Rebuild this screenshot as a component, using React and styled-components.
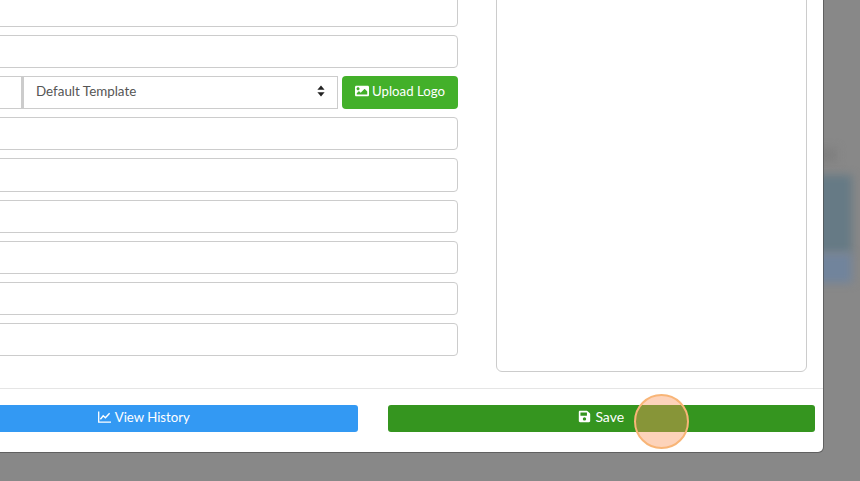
import React from "react";
import styled, { createGlobalStyle } from "styled-components";
import { FaImage, FaSave } from "react-icons/fa";

const Global = createGlobalStyle`
  html, body { margin: 0; padding: 0; background: #888; }
  body { font-family: "Lato", "Liberation Sans", sans-serif; }
`;

const Page = styled.div`
  position: relative;
  width: 860px;
  height: 481px;
  overflow: hidden;
  background: #888888;
`;

const BackdropBlob = styled.div`
  position: absolute;
  left: 815px;
  width: ${(p) => p.$w}px;
  top: ${(p) => p.$top}px;
  height: ${(p) => p.$h}px;
  background: ${(p) => p.$color};
  filter: blur(4px);
`;

const Modal = styled.div`
  position: relative;
  width: 901px;
  margin: -20px 0 0 -78px;
  box-sizing: border-box;
  background: #fff;
  border-radius: 0 0 5px 0;
  box-shadow: 0 0 0 1px rgba(70, 70, 70, 0.6);
`;

const Body = styled.div`
  display: flex;
  gap: 38px;
  padding: 13.6px 16px 16px;
`;

const Form = styled.div`
  flex: 1;
  display: flex;
  flex-direction: column;
  gap: 8px;
  padding-bottom: 16px;
`;

const Field = styled.div`
  height: 33.2px;
  box-sizing: border-box;
  border: 1px solid #ccc;
  border-radius: 4px;
  background: #fff;
`;

const Row = styled.div`
  display: flex;
  height: 33.2px;
`;

const Addon = styled.div`
  width: 85px;
  box-sizing: border-box;
  border: 1px solid #ccc;
  border-right-width: 2px;
  border-radius: 4px 0 0 4px;
`;

const Select = styled.div`
  flex: 1;
  display: flex;
  align-items: center;
  justify-content: space-between;
  box-sizing: border-box;
  padding: 0 12px 3px;
  border: 1px solid #ccc;
  font-size: 13.4px;
  color: #555;
  margin-right: 4px;
`;

const UploadButton = styled.div`
  width: 116px;
  display: flex;
  align-items: center;
  justify-content: center;
  gap: 3px;
  box-sizing: border-box;
  padding-bottom: 3px;
  background: #43b02a;
  color: #fff;
  border-radius: 4px;
  font-size: 13.2px;
`;

const Panel = styled.div`
  width: 311px;
  box-sizing: border-box;
  border: 1px solid #ccc;
  border-radius: 6px;
`;

const Footer = styled.div`
  display: grid;
  grid-template-columns: 1fr 1fr;
  gap: 30px;
  padding: 16px 8px 20px;
  border-top: 1px solid #e5e5e5;
`;

const ActionButton = styled.div`
  height: 27px;
  display: flex;
  align-items: center;
  justify-content: center;
  gap: 4px;
  box-sizing: border-box;
  padding-bottom: ${(p) => p.$lift}px;
  background: ${(p) => p.$bg};
  color: #fff;
  border-radius: 3px;
  font-size: ${(p) => p.$size}px;
`;

const ClickMarker = styled.div`
  position: absolute;
  left: 634px;
  top: 394px;
  width: 55px;
  height: 55px;
  box-sizing: border-box;
  border-radius: 50%;
  background: rgba(250, 150, 90, 0.42);
  border: 2px solid #f8b577;
`;

const Arrows = () => (
  <svg width="8" height="12" viewBox="0 0 8 12" fill="#222">
    <path d="M4 0.5 L7.6 4.8 H0.4 Z" />
    <path d="M4 11.5 L7.6 7.2 H0.4 Z" />
  </svg>
);

const LineChartIcon = () => (
  <svg width="13" height="12" viewBox="0 0 13 12" fill="none" stroke="#fff">
    <path d="M0.7 0.5 V11.2 H13" strokeWidth="1.3" />
    <path d="M2.4 8.2 L5.2 4.8 L7.4 6.8 L11.6 2.2" strokeWidth="1.4" />
  </svg>
);

export default function App() {
  return (
    <Page>
      <Global />
      <BackdropBlob $top={148} $h={14} $w={22} $color="#7f7f7f" />
      <BackdropBlob $top={175} $h={78} $w={37} $color="#667a85" />
      <BackdropBlob $top={253} $h={30} $w={37} $color="#71849c" />
      <Modal>
        <Body>
          <Form>
            <Field />
            <Field />
            <Row>
              <Addon />
              <Select>
                <span>Default Template</span>
                <Arrows />
              </Select>
              <UploadButton>
                <FaImage size={14} />
                <span>Upload Logo</span>
              </UploadButton>
            </Row>
            <Field />
            <Field />
            <Field />
            <Field />
            <Field />
            <Field />
          </Form>
          <Panel />
        </Body>
        <Footer>
          <ActionButton $bg="#3399f3" $size={13.2} $lift={3}>
            <LineChartIcon />
            <span>View History</span>
          </ActionButton>
          <ActionButton $bg="#35951f" $size={14} $lift={4}>
            <FaSave size={13} />
            <span>Save</span>
          </ActionButton>
        </Footer>
      </Modal>
      <ClickMarker />
    </Page>
  );
}
